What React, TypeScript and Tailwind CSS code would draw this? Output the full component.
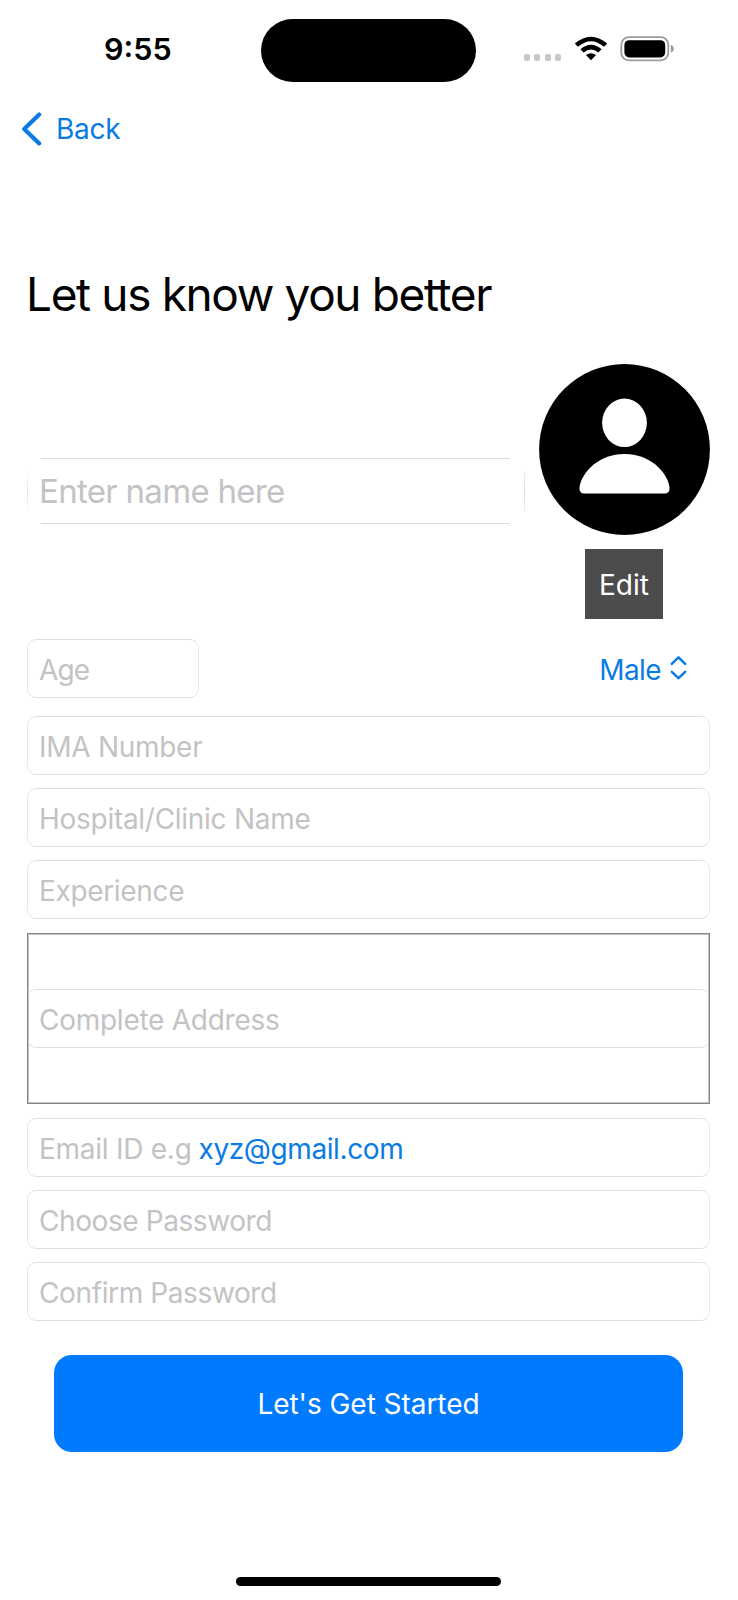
import type { ReactNode } from "react";

function Field({ children, className = "" }: { children: ReactNode; className?: string }) {
  return (
    <div
      className={`flex h-[59px] items-center rounded-[9px] border border-x-[#e9e9e9] border-y-[#dfdfdf] pt-[2px] pl-[11px] text-[28px] leading-none whitespace-pre text-[#c3c3c5] ${className}`}
    >
      {children}
    </div>
  );
}

function StatusBar() {
  return (
    <header className="flex h-[100px] shrink-0 items-start">
      <div className="ml-[104px] mt-[33px] w-[156.5px] text-[30.5px] leading-[31px] font-semibold">9:55</div>
      <div className="mt-[18.5px] h-[63px] w-[215.5px] rounded-full bg-black" />
      <div className="mt-[54px] ml-[47.5px] flex gap-[4.5px]">
        {[0, 1, 2, 3].map((i) => (
          <span key={i} className="h-[6.5px] w-[6px] rounded-[2px] bg-[#c8c8c8]" />
        ))}
      </div>
      <svg className="mt-[36px] ml-[12.5px] shrink-0" width="34" height="25" viewBox="0 0 34 25">
        <path d="M0.8 7.6 Q17 -6.2 33.2 7.6 L30 10.8 Q17 -0.4 4 10.8 Z" fill="#000" />
        <path d="M6.4 13.3 Q17 4.3 27.6 13.3 L24.4 16.6 Q17 10.4 9.6 16.6 Z" fill="#000" />
        <path d="M12 19.1 Q17 15.2 22 19.1 L17 24.3 Z" fill="#000" />
      </svg>
      <svg className="mt-[36px] ml-[12.5px] shrink-0" width="56" height="26" viewBox="0 0 56 26">
        <rect x="1.3" y="1.2" width="47" height="23.2" rx="7.4" fill="none" stroke="#9c9c9c" strokeWidth="1.8" />
        <rect x="4.4" y="4.2" width="40.8" height="17.2" rx="4.8" fill="#000" />
        <path d="M50.8 9 Q53.8 10 53.8 12.8 Q53.8 15.6 50.8 16.6 Z" fill="#9c9c9c" />
      </svg>
    </header>
  );
}

function NameField() {
  return (
    <div className="relative flex h-[66px] w-[498px] items-center pt-px pl-[12px] text-[33px] leading-none tracking-[-0.7px] text-[#c3c3c5]">
      <span className="absolute top-0 right-[15px] left-[14px] h-px bg-[#dcdcdc]" />
      <span className="absolute right-[15px] bottom-0 left-[14px] h-px bg-[#dcdcdc]" />
      <span className="absolute top-[13px] bottom-[12px] left-0 w-px bg-linear-to-b from-transparent via-[#e2e2e2] to-transparent" />
      <span className="absolute top-[13px] right-0 bottom-[12px] w-px bg-linear-to-b from-[#f0f0f0] via-[#dcdcdc] to-[#f0f0f0]" />
      Enter name here
    </div>
  );
}

export default function App() {
  return (
    <div className="flex h-[1600px] w-[738px] flex-col bg-white font-['Inter',sans-serif] text-black">
      <StatusBar />

      <nav className="flex h-[60px] shrink-0 items-center pl-[21px] text-[28px] leading-none tracking-[-0.3px] text-[#0b7be4]">
        <svg width="22" height="34" viewBox="0 0 22 34" className="mr-[13px] -mt-[2px]">
          <path d="M18.2 2.6 L3.2 17 L18.2 31.4" fill="none" stroke="currentColor" strokeWidth="4.2" strokeLinecap="round" strokeLinejoin="round" />
        </svg>
        <span className="-mt-[2px]">Back</span>
      </nav>

      <main className="flex flex-col pr-[27px] pl-[27px]">
        <h1 className="mt-[103px] -ml-[1px] pt-[2px] text-[46px] leading-[58px] font-normal tracking-[-1.37px] whitespace-nowrap">Let us know you better</h1>

        <section className="mt-[41px] flex h-[255px] items-center justify-between">
          <div className="-mt-[2px]">
            <NameField />
          </div>
          <div className="mr-[1.5px] flex w-[171px] flex-col items-center">
            <svg width="171" height="171" viewBox="0 0 171 171">
              <circle cx="85.5" cy="85.5" r="85.4" fill="#000" />
              <ellipse cx="85.5" cy="58.8" rx="22.4" ry="24.2" fill="#fff" />
              <path d="M45.5 129.5 C42 129.5 40.5 127.8 40.5 124.5 C40.5 113 56 90 85.5 90 C115 90 130.5 113 130.5 124.5 C130.5 127.8 129 129.5 125.5 129.5 Z" fill="#fff" />
            </svg>
            <button className="mt-[14px] flex h-[70px] w-[78px] items-center justify-center bg-[#4c4c4c] pt-px text-[28px] leading-none text-white">Edit</button>
          </div>
        </section>

        <section className="mt-[20px] flex items-center justify-between">
          <Field className="w-[172px] tracking-[-0.9px]">Age</Field>
          <button className="mr-[24px] mt-[2px] flex items-center text-[28px] leading-none tracking-[-0.6px] text-[#0b7be4]">
            Male
            <svg width="17" height="26" viewBox="0 0 17 26" className="ml-[9px] -mt-[3px]">
              <path d="M1.8 8.8 L8.5 2.4 L15.2 8.8 M1.8 16.8 L8.5 23.2 L15.2 16.8" fill="none" stroke="currentColor" strokeWidth="2.5" strokeLinecap="round" strokeLinejoin="round" />
            </svg>
          </button>
        </section>

        <section className="mt-[18px] mr-px flex flex-col gap-[13px]">
          <Field className="tracking-[-0.28px]">IMA Number</Field>
          <Field className="tracking-[-0.28px]">Hospital/Clinic Name</Field>
          <Field className="tracking-[-0.34px]">Experience</Field>
        </section>

        <div className="relative mt-[14px] mr-px flex h-[171px] flex-col justify-center">
          <Field className="tracking-[-0.26px]">Complete Address</Field>
          <span className="absolute inset-0 border border-[#858585] shadow-[inset_0_0_0_1px_#c4c4c4]" />
        </div>

        <section className="mt-[14px] mr-px flex flex-col gap-[13px]">
          <Field>
            <span className="tracking-[-0.26px]">Email ID e.g</span>
            <span className="ml-[7px] tracking-[-0.4px] text-[#0b7be4]">xyz@gmail.com</span>
          </Field>
          <Field className="tracking-[-0.41px]">Choose Password</Field>
          <Field className="tracking-[-0.38px]">Confirm Password</Field>
        </section>

        <button className="mt-[34px] ml-[27px] h-[97px] w-[629px] rounded-[18px] bg-[#007aff] pt-px text-[28px] leading-none tracking-[-0.05px] text-white">Let's Get Started</button>
      </main>

      <div className="mt-[125px] ml-[236px] h-[9px] w-[265px] shrink-0 rounded-full bg-black" />
    </div>
  );
}
